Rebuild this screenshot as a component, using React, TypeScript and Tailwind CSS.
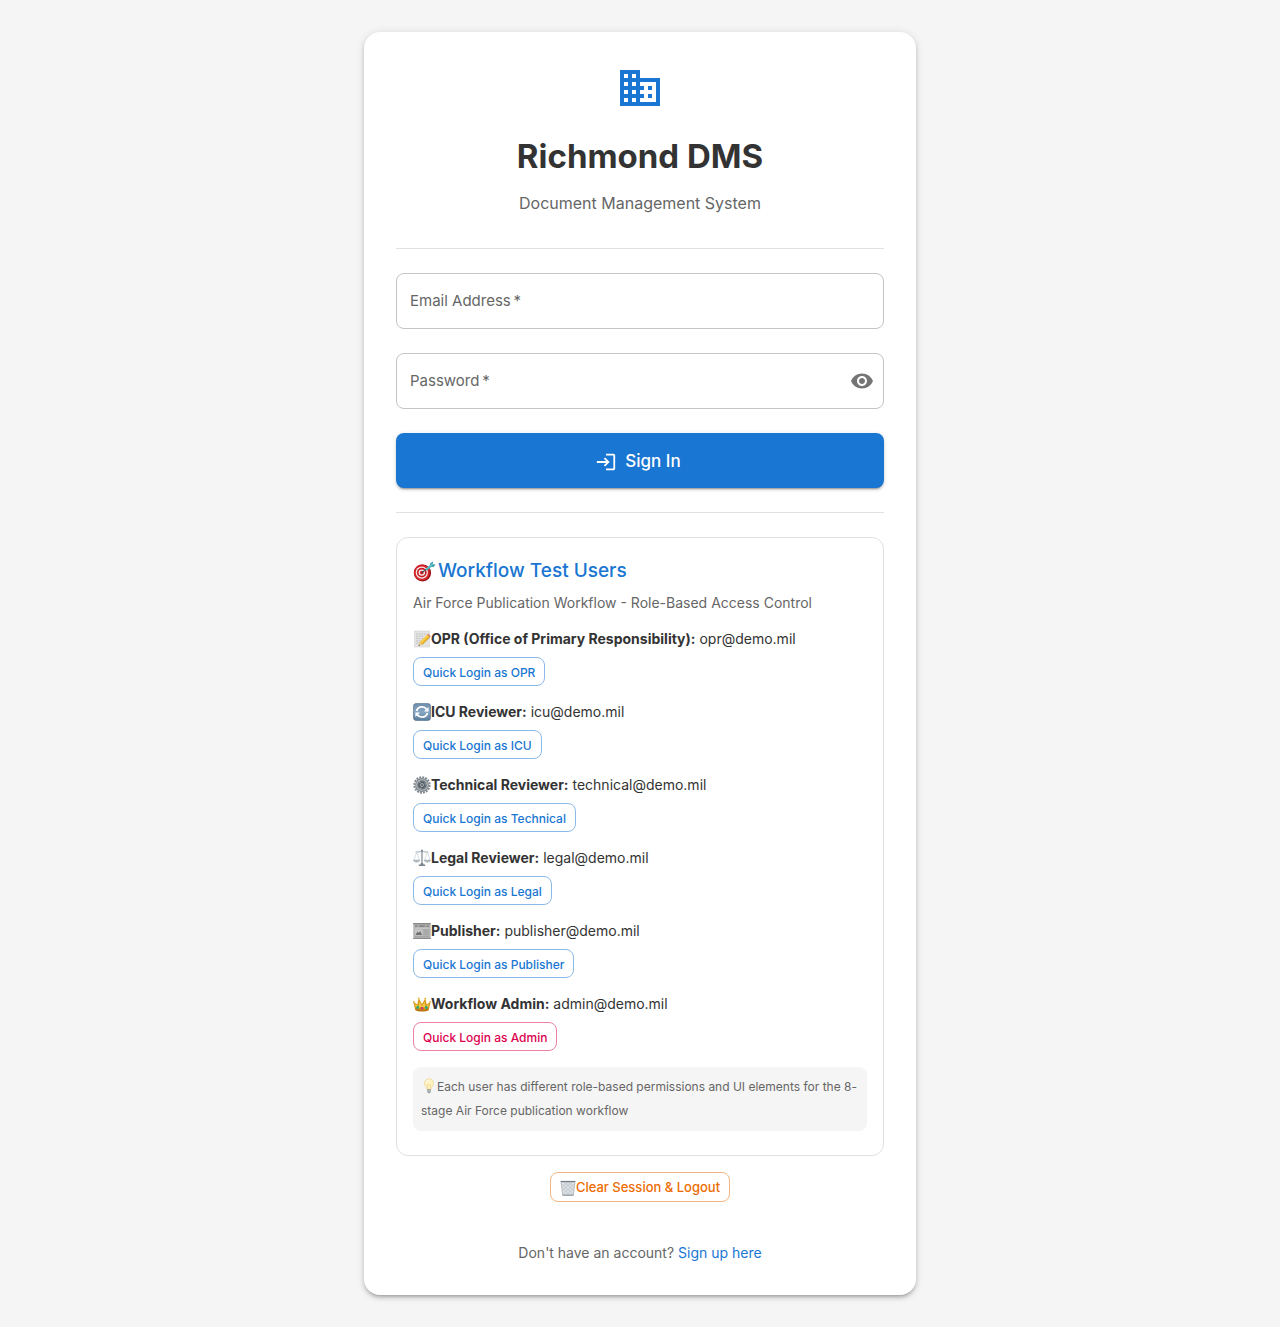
import { useState, type ReactNode } from 'react';
import { MdBusiness, MdLogin, MdVisibility, MdVisibilityOff } from 'react-icons/md';

function TargetIcon() {
  return (
    <svg viewBox="0 0 24 24" className="h-6 w-6 shrink-0" aria-hidden="true">
      <ellipse cx="9.5" cy="14" rx="8.6" ry="8.4" fill="#8f1015" />
      <circle cx="8.8" cy="13.6" r="8" fill="#d5232a" />
      <circle cx="8.8" cy="13.6" r="6.1" fill="#f4eeee" />
      <circle cx="8.8" cy="13.6" r="4.9" fill="#c91f27" />
      <circle cx="8.8" cy="13.6" r="3.2" fill="#f4eeee" />
      <circle cx="8.8" cy="13.6" r="1.9" fill="#c91f27" />
      <path d="M9 13.5 18 7" stroke="#3b5f68" strokeWidth="1.2" />
      <path d="m13 10.6 5-3.8" stroke="#4cc0c9" strokeWidth="2.2" />
      <path d="m16.5 7.5 1-3.6 2.6-1.4-.2 2.5 2.6.8-2 2.3z" fill="#399faa" />
      <path d="m17.2 7.1 2.8-2.3" stroke="#a5eef0" strokeWidth=".8" />
    </svg>
  );
}

function MemoIcon() {
  return (
    <svg viewBox="0 0 18 18" className="size-[18px]" aria-hidden="true">
      <path d="M1.5 1h15v16h-15z" fill="#e4e4e3" stroke="#d0d0d0" strokeWidth=".6" />
      <path d="M3 4h10M3 6.3h8M3 8.6h8M3 10.9h6M3 13.2h4" stroke="#b4b4b4" strokeWidth=".7" strokeDasharray="2 .6" />
      <path d="m5.500 16 1.300-3.800 8-8.200 2.700 2.500-8.200 8.100z" fill="#f3bd2b" />
      <path d="m7.400 13 8.300-8.200" stroke="#ffe16b" strokeWidth="1" />
      <path d="m9 14.600 8.200-8" stroke="#b8841b" strokeWidth=".7" />
      <path d="m14 4.800 1.200-1.200 2.500 2.400-1.200 1.200z" fill="#d98a77" />
      <path d="m5.500 16 1.300-3.800 2.500 2.400z" fill="#dfc69f" />
      <path d="m5.500 16 .5-1.400.9.900z" fill="#444" />
    </svg>
  );
}

function RefreshIcon() {
  return (
    <svg viewBox="0 0 18 18" className="size-[18px]" aria-hidden="true">
      <defs>
        <linearGradient id="refresh-face" x1="0" y1="0" x2="0" y2="1">
          <stop stopColor="#6f8da9" />
          <stop offset=".5" stopColor="#86a7c4" />
          <stop offset="1" stopColor="#587b9a" />
        </linearGradient>
      </defs>
      <rect x=".4" y=".4" width="17.2" height="17.2" rx="3" fill="url(#refresh-face)" stroke="#58738d" strokeWidth=".7" />
      <path d="M3.600 8C4.300 5.200 6.500 3.900 9 3.900c2 0 3.600.9 4.600 2.400" fill="none" stroke="#fff" strokeWidth="1.900" />
      <path d="M14.400 10c-.7 2.800-2.900 4.100-5.400 4.100-2 0-3.600-.9-4.600-2.400" fill="none" stroke="#fff" strokeWidth="1.900" />
      <path d="M15.600 4v4.600H11zM2.400 14V9.400H7z" fill="#fff" />
    </svg>
  );
}

function GearIcon() {
  return (
    <svg viewBox="0 0 18 18" className="size-[18px]" aria-hidden="true">
      <circle cx="9" cy="9" r="7.700" fill="none" stroke="#858c92" strokeWidth="2" strokeDasharray="2 1.020" />
      <circle cx="9" cy="9" r="6.900" fill="#7d858b" />
      <circle cx="9" cy="9" r="5.400" fill="none" stroke="#aab1b6" strokeWidth="1.400" />
      <circle cx="9" cy="9" r="4.300" fill="#687178" />
      <path d="M9 9 6 5M9 9l4.500-1.500M9 9l-1.500 4.500" stroke="#9aa2a8" strokeWidth="1.200" />
      <circle cx="9" cy="9" r="2.300" fill="#c6cbce" stroke="#3f484f" strokeWidth=".9" />
      <circle cx="9" cy="9" r=".9" fill="#4a535a" />
    </svg>
  );
}

function ScalesIcon() {
  return (
    <svg viewBox="0 0 18 18" className="size-[18px]" aria-hidden="true">
      <path d="M9 1v15" stroke="#87929a" strokeWidth="1.300" />
      <path d="M2.500 3.200 9 2.500l6.500.7" fill="none" stroke="#9aa5ac" strokeWidth=".9" />
      <path d="M3.700 3.200.9 11.200M3.700 3.200l2.700 8M14.300 3.200l-2.700 8M14.300 3.200l2.800 8" stroke="#c1c9ce" strokeWidth=".6" />
      <path d="M.4 11h6.500c-.5 1.500-1.500 2.200-3.200 2.200S.9 12.500.4 11ZM11.100 11h6.500c-.5 1.500-1.500 2.200-3.200 2.200s-2.800-.7-3.300-2.200Z" fill="#b5bfc5" stroke="#8e999f" strokeWidth=".4" />
      <circle cx="9" cy="1.500" r="1" fill="#7c878e" />
      <path d="M8 14h2l.5 1.600h1.700v1.300H5.800v-1.300h1.700z" fill="#78838b" />
    </svg>
  );
}

function NewspaperIcon() {
  return (
    <svg viewBox="0 0 18 18" className="size-[18px]" aria-hidden="true">
      <path d="M.3 1h17.400v16H.3z" fill="#b2b2b2" />
      <path d="M.3 1h17.400v1.300H.3z" fill="#888" />
      <path d="M2 4.200h2.500M6 4.200h6M13.500 4.200H16" stroke="#777" strokeWidth="1.200" />
      <path d="M1.500 6.200h15" stroke="#d6d6d6" strokeWidth=".8" />
      <path d="M2 7.500h7.500v6H2z" fill="#c8c8c8" />
      <path d="m2.500 13 2-3.500 1.500 1.500 1.200-2.200L9 13z" fill="#6e6e6e" />
      <path d="M10.500 8H16M10.500 10H16M10.500 12H16M2 14.800h14" stroke="#999" strokeWidth=".7" />
      <path d="M.3 16h17.400v1H.3z" fill="#8a8a8a" />
    </svg>
  );
}

function CrownIcon() {
  return (
    <svg viewBox="0 0 18 18" className="size-[18px]" aria-hidden="true">
      <path d="M2 14 .2 6.500 4.300 9.500 5.700 3.200 9 9l3.300-5.800 1.400 6.300 4.100-3L16 14c-2.500 2.300-11.500 2.300-14 0Z" fill="#d99a1c" />
      <path d="M3 12.500 1.800 9l4 2.500.5-5L9 11l2.700-4.500.5 5 4-2.500-1.200 3.500z" fill="#f0c843" />
      <path d="M2.200 13.200c3 1.700 10.600 1.700 13.600 0v1.700c-2.500 2.100-11.100 2.100-13.600 0Z" fill="#b87514" />
      <circle cx="5.700" cy="3.400" r=".9" fill="#e8b931" />
      <circle cx="12.300" cy="3.400" r=".9" fill="#e8b931" />
      <circle cx=".9" cy="6.700" r=".8" fill="#dba827" />
      <circle cx="17.100" cy="6.700" r=".8" fill="#dba827" />
      <circle cx="9" cy="13.200" r="1.400" fill="#c93f62" />
      <circle cx="4.700" cy="12.500" r="1.400" fill="#25a777" />
      <circle cx="13.300" cy="12.500" r="1.400" fill="#25a777" />
    </svg>
  );
}

function BulbIcon() {
  return (
    <svg viewBox="0 0 16 16" className="inline-block size-4 align-[-3px]" aria-hidden="true">
      <path d="M8 .7a4.500 4.500 0 0 0-4.500 4.700c0 2.500 2.100 3.300 2.600 6h3.800c.5-2.700 2.600-3.500 2.600-6A4.500 4.500 0 0 0 8 .7Z" fill="#fff3c4" stroke="#ecd795" strokeWidth=".8" />
      <path d="M6.900 11 6.300 6.500l1.700.8 1.700-.8-.6 4.500" fill="none" stroke="#edca72" strokeWidth=".5" />
      <path d="M5 4.500C5.500 3 6.500 2.500 7.500 2.300" fill="none" stroke="#fff" strokeWidth="1" />
      <path d="M6 11.200h4l-.4 3.300-1.600 1-1.600-1z" fill="#969a9b" />
      <path d="M6.200 12.600h3.600M6.500 14h3" stroke="#d7dadb" strokeWidth=".5" />
    </svg>
  );
}

function TrashIcon() {
  return (
    <svg viewBox="0 0 16 16" className="size-4" aria-hidden="true">
      <path d="M1 1.500h14L13.300 15.500H2.700z" fill="#dce1e5" stroke="#a3abb1" strokeWidth=".7" />
      <path d="m2 4 11 10M2.500 8l7 7M4 2l9.500 8.500M8 2l6 5.500M14 4 3 14M13.500 8l-7 7M12 2l-9.500 8.500M8 2 2 7.500" stroke="#b5bdc3" strokeWidth=".6" />
      <path d="M.7.900h14.600v1.300H.7z" fill="#747d84" />
      <path d="M2.700 14.500h10.600v1.100H2.700z" fill="#929ba2" />
    </svg>
  );
}

type User = { role: string; email: string; short: string; icon: ReactNode; admin?: boolean };

const users: User[] = [
  { role: 'OPR (Office of Primary Responsibility):', email: 'opr@demo.mil', short: 'OPR', icon: <MemoIcon /> },
  { role: 'ICU Reviewer:', email: 'icu@demo.mil', short: 'ICU', icon: <RefreshIcon /> },
  { role: 'Technical Reviewer:', email: 'technical@demo.mil', short: 'Technical', icon: <GearIcon /> },
  { role: 'Legal Reviewer:', email: 'legal@demo.mil', short: 'Legal', icon: <ScalesIcon /> },
  { role: 'Publisher:', email: 'publisher@demo.mil', short: 'Publisher', icon: <NewspaperIcon /> },
  { role: 'Workflow Admin:', email: 'admin@demo.mil', short: 'Admin', icon: <CrownIcon />, admin: true },
];

type FieldProps = {
  id: string;
  label: string;
  type: string;
  value: string;
  onChange: (value: string) => void;
  children?: ReactNode;
};

function Field({ id, label, type, value, onChange, children }: FieldProps) {
  return (
    <div className="relative flex h-14 items-center rounded-lg border border-[#c4c4c4] focus-within:border-[#1976d2]">
      <input
        id={id}
        type={type}
        required
        placeholder=" "
        value={value}
        onChange={(e) => onChange(e.target.value)}
        className="peer h-full min-w-0 flex-1 rounded-lg bg-transparent px-[13px] text-[15px] outline-none"
      />
      <label
        htmlFor={id}
        className="pointer-events-none absolute top-[15px] left-[13px] bg-white text-[15px] leading-6 text-[#666666] peer-focus:-top-3 peer-focus:text-xs peer-[:not(:placeholder-shown)]:-top-3 peer-[:not(:placeholder-shown)]:text-xs"
      >
        {label}
        {'\u2009*'}
      </label>
      {children}
    </div>
  );
}

export default function App() {
  const [email, setEmail] = useState('');
  const [password, setPassword] = useState('');
  const [visible, setVisible] = useState(false);

  return (
    <main className="flex min-h-screen items-center justify-center bg-[#f5f5f5] px-6 py-8 font-['Inter',sans-serif] text-[#333333]">
      <div className="w-full max-w-[552px] rounded-2xl bg-white p-8 shadow-[0_3px_3px_-2px_rgba(0,0,0,0.2),0_3px_4px_0_rgba(0,0,0,0.14),0_1px_8px_0_rgba(0,0,0,0.12)]">
        <header className="flex flex-col items-center text-center">
          <MdBusiness className="size-12 text-[#1976d2]" aria-hidden="true" />
          <h1 className="mt-[23px] text-[33px] leading-[42px] font-bold">Richmond DMS</h1>
          <p className="mt-[14px] text-base leading-6 text-[#666666]">Document Management System</p>
        </header>

        <hr className="mt-[33px] border-[#e0e0e0]" />

        <form className="mt-6 flex flex-col gap-6" onSubmit={(e) => e.preventDefault()}>
          <Field id="email" label="Email Address" type="email" value={email} onChange={setEmail} />
          <Field id="password" label="Password" type={visible ? 'text' : 'password'} value={password} onChange={setPassword}>
            <button
              type="button"
              aria-label={visible ? 'Hide password' : 'Show password'}
              onClick={() => setVisible(!visible)}
              className="mr-[1px] flex size-10 items-center justify-center rounded-full text-[#757575]"
            >
              {visible ? <MdVisibilityOff className="size-6" /> : <MdVisibility className="size-6" />}
            </button>
          </Field>
          <button
            type="submit"
            className="flex h-[55px] items-center justify-center gap-2 rounded-lg bg-[#1976d2] pt-0.5 pr-1 text-[17px] font-medium text-white shadow-[0_3px_1px_-2px_rgba(0,0,0,0.2),0_2px_2px_0_rgba(0,0,0,0.14),0_1px_5px_0_rgba(0,0,0,0.12)]"
          >
            <MdLogin className="size-[22px]" aria-hidden="true" />
            Sign In
          </button>
        </form>

        <hr className="mt-6 border-[#e0e0e0]" />

        <section className="mt-6 rounded-xl border border-[#e0e0e0] px-4 pt-[17px] pb-6">
          <h2 className="flex items-center gap-[1px] text-[19px] leading-8 font-medium text-[#1976d2]">
            <TargetIcon />
            Workflow Test Users
          </h2>
          <p className="mt-[6px] text-sm leading-5 text-[#666666]">
            Air Force Publication Workflow - Role-Based Access Control
          </p>

          <ul className="mt-4 flex flex-col gap-4">
            {users.map((user) => (
              <li key={user.short} className="flex flex-col items-start gap-2">
                <p className="flex items-center text-sm leading-5">
                  {user.icon}
                  <span>
                    <strong className="font-bold">{user.role}</strong> {user.email}
                  </span>
                </p>
                <button
                  type="button"
                  onClick={() => setEmail(user.email)}
                  className={
                    user.admin
                      ? 'h-[29px] rounded-lg border border-[#ee80a7] px-[9px] pt-0.5 text-xs font-medium text-[#dc004e]'
                      : 'h-[29px] rounded-lg border border-[#8cbae8] px-[9px] pt-0.5 text-xs font-medium text-[#1976d2]'
                  }
                >
                  Quick Login as {user.short}
                </button>
              </li>
            ))}
          </ul>

          <p className="mt-4 rounded-lg bg-[#f5f5f5] p-2 text-xs leading-6 text-[#666666]">
            <BulbIcon />
            Each user has different role-based permissions and UI elements for the 8-stage Air Force publication workflow
          </p>
        </section>

        <div className="mt-4 flex justify-center">
          <button
            type="button"
            onClick={() => {
              setEmail('');
              setPassword('');
            }}
            className="flex h-[30px] items-center rounded-lg border border-[#f6b580] px-[9px] pt-0.5 text-[13px] font-medium text-[#ed6c02]"
          >
            <TrashIcon />
            Clear Session &amp; Logout
          </button>
        </div>

        <p className="mt-[41px] text-center text-sm leading-5 text-[#666666]">
          Don't have an account?{' '}
          <a href="#signup" className="text-[#1976d2]">
            Sign up here
          </a>
        </p>
      </div>
    </main>
  );
}
